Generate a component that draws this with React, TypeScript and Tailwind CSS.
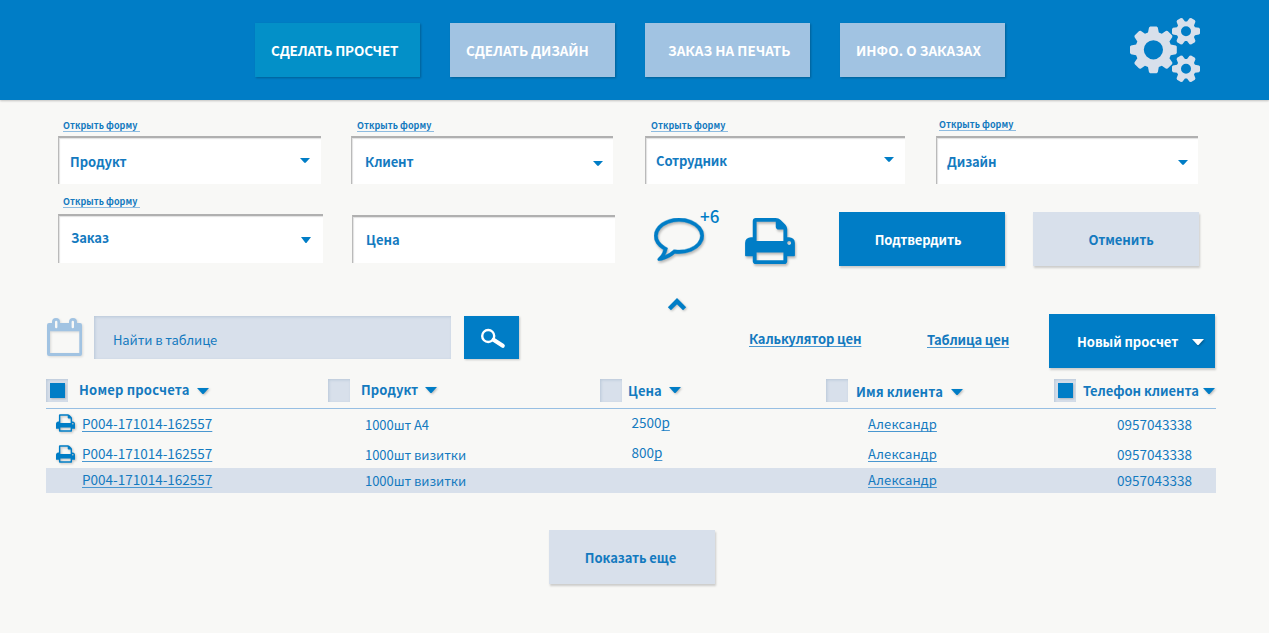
import React from "react";
import type { ReactNode } from "react";
import { clsx } from "clsx";

function Caret({ className }: { className?: string }) {
  return (
    <svg viewBox="0 0 12 6" preserveAspectRatio="none" className={clsx("shrink-0 fill-current", className)}>
      <path d="M0 0H12L7 5.4Q6 6.4 5 5.4Z" />
    </svg>
  );
}

function PrinterIcon({ className }: { className: string }) {
  return (
    <svg viewBox="0 128 1664 1536" className={clsx("shrink-0 fill-current", className)}>
      <path d="M384 1536h896v-256h-896v256zm0-640h896v-384h-160q-40 0-68-28t-28-68v-160h-640v640zm1152 64q0-26-19-45t-45-19-45 19-19 45 19 45 45 19 45-19 19-45zm128 0v416q0 13-9.5 22.5t-22.5 9.5h-224v160q0 40-28 68t-68 28h-960q-40 0-68-28t-28-68v-160h-224q-13 0-22.5-9.5t-9.5-22.5v-416q0-79 56.5-135.5t135.5-56.5h64v-544q0-40 28-68t68-28h672q40 0 88 20t76 48l152 152q28 28 48 76t20 88v256h64q79 0 135.5 56.5t56.5 135.5z" />
    </svg>
  );
}

function CommentIcon() {
  return (
    <svg viewBox="0 256 1792 1544" className="h-[43px] w-[50px] fill-current drop-shadow-[1px_2px_1px_rgba(0,0,0,0.25)]">
      <path d="M896 384q-204 0-381.5 69.5t-282 187.5-104.5 255q0 112 71.500 213.500t201.500 175.500l87 50-27 96q-24 91-70 172 152-63 275-171l43-38 57 6q69 8 130 8 204 0 381.500-69.500t282-187.500 104.500-255-104.500-255-282-187.500-381.500-69.500zm896 512q0 174-120 321.500t-326 233-450 85.500q-70 0-145-8-198 175-460 242-49 14-114 22-17 2-30.500-9t-17.500-29v-1q-3-4-.5-12t2-10 4.500-9.500l6-9 7-8.500 8-9q7-8 31-34.500t34.500-38 31-39.500 32.500-51 27-59 26-76q-157-89-247.500-220t-90.500-281q0-130 71-248.500t191-204.500 286-136.500 348-50.500q244 0 450 85.500t326 233 120 321.500z" stroke="currentColor" strokeWidth="14" />
    </svg>
  );
}

// Outline of a toothed wheel, plus its centre hole (even-odd filled).
function gear(cx: number, cy: number, teeth: number, outer: number, body: number, hole: number, tip: number, base: number) {
  const points: string[] = [];
  for (let i = 0; i < teeth; i++) {
    const a = (i * 2 * Math.PI) / teeth;
    const corners: [number, number][] = [[body, -base], [outer - 1, -tip - 0.4], [outer, -tip + 0.8], [outer, tip - 0.8], [outer - 1, tip + 0.4], [body, base]];
    for (const [r, o] of corners) {
      const x = cx + r * Math.cos(a) - o * Math.sin(a);
      const y = cy + r * Math.sin(a) + o * Math.cos(a);
      points.push(`${x.toFixed(2)} ${y.toFixed(2)}`);
    }
  }
  return `M${points.join("L")}ZM${cx - hole} ${cy}a${hole} ${hole} 0 1 0 ${hole * 2} 0a${hole} ${hole} 0 1 0 ${-hole * 2} 0Z`;
}

function GearsIcon() {
  return (
    <svg viewBox="0 0 70 64" className="h-[64px] w-[70px] fill-[#d8e0eb]" fillRule="evenodd">
      <path d={gear(23.4, 31.8, 8, 23.4, 17.3, 9.6, 4, 5.4)} />
      <path d={gear(56, 13.2, 6, 14, 9, 5, 3, 4)} />
      <path d={gear(56, 50.8, 6, 14, 9, 5, 3, 4)} />
    </svg>
  );
}

function CalendarIcon() {
  return (
    <svg viewBox="0 0 36 39" className="mt-[4px] ml-[47px] h-[39px] w-[36px] shrink-0 drop-shadow-[1px_1px_1px_rgba(0,0,0,0.12)]">
      <path fill="#a1c3e2" fillRule="evenodd" d="M2 5H5V4a4 4 0 0 1 8 0V5h9V4a4 4 0 0 1 8 0V5h3a2 2 0 0 1 2 2V36a2 2 0 0 1-2 2H2a2 2 0 0 1-2-2V7a2 2 0 0 1 2-2ZM3 13.3V35H32.3V13.3Z" />
      <path fill="none" stroke="#f8f8f6" strokeWidth="2.4" strokeLinecap="round" d="M9.2 4V9M25.8 4V9" />
    </svg>
  );
}

const tabs = [
  { text: "СДЕЛАТЬ ПРОСЧЕТ", style: "bg-[#0390c8] pl-[16px] tracking-[-0.15px]" },
  { text: "СДЕЛАТЬ ДИЗАЙН", style: "bg-[#a1c3e2] pl-[16px] tracking-[-0.05px]" },
  { text: "ЗАКАЗ НА ПЕЧАТЬ", style: "bg-[#a1c3e2] pl-[23px] tracking-[0.05px]" },
  { text: "ИНФО. О ЗАКАЗАХ", style: "bg-[#a1c3e2] pl-[16px] tracking-[0.05px]" },
];

function OpenForm({ className }: { className?: string }) {
  return (
    <a className={clsx("block h-[12px] w-[77px] border-b border-[#8dbbe0] text-[9px] leading-[12px] font-bold tracking-[0.05px] whitespace-nowrap", className)}>
      Открыть форму
    </a>
  );
}

function FieldBox({ className, children }: { className: string; children: ReactNode }) {
  return (
    <div className={clsx("flex items-start justify-between border-t-2 border-l border-t-[#b0b0b0] border-l-[#bababa] bg-white text-[13px] leading-5 font-semibold shadow-[inset_1px_1px_1px_rgba(0,0,0,0.12)]", className)}>
      {children}
    </div>
  );
}

function CheckBox({ checked }: { checked?: boolean }) {
  return (
    <span className="flex h-[23px] w-[22px] shrink-0 items-start justify-center bg-[#d8e0eb] pt-[4px] shadow-[inset_1px_1px_3px_rgba(140,165,190,0.4)]">
      {checked && <span className="h-[15px] w-[15px] bg-[#007dc6] shadow-[1px_1px_2px_rgba(0,0,0,0.2)]" />}
    </span>
  );
}

const columns = [
  { text: "Номер просчета", checked: true, label: "ml-[11px] mt-[1px] tracking-[0.2px]", caret: "left-[151px] top-[9px]" },
  { text: "Продукт", checked: false, label: "ml-[11px] mt-[1px] tracking-[0.1px]", caret: "left-[97px] top-[8px]" },
  { text: "Цена", checked: false, label: "ml-[6px] mt-[2px]", caret: "left-[69px] top-[8px]" },
  { text: "Имя клиента", checked: false, label: "ml-[8px] mt-[3px] tracking-[0.12px]", caret: "left-[125px] top-[10px]" },
  { text: "Телефон клиента", checked: true, label: "ml-[7px] mt-[2px] tracking-[-0.05px]", caret: "left-[149px] top-[9px]" },
];

const rows = [
  { product: "1000шт А4", price: "2500", printed: true, style: "h-[29px] pt-[4px]", icon: "pt-[1px]" },
  { product: "1000шт визитки", price: "800", printed: true, style: "h-[30px] pt-[5px]", icon: "pt-[2px]" },
  { product: "1000шт визитки", price: "", printed: false, style: "h-[25px] bg-[#d8e0eb] pt-[1px]", icon: "" },
];

const link = "underline decoration-[#4a97d0] decoration-1 underline-offset-[2px] [text-decoration-skip-ink:none]";
const raised = "shadow-[1px_2px_2px_rgba(0,0,0,0.18)]";

export default function App() {
  return (
    <div className="h-[633px] w-[1269px] overflow-hidden bg-[#f8f8f6] font-['Noto_Sans_CJK_SC','Noto_Sans',sans-serif] whitespace-nowrap text-[#147abf]">
      <header className="flex h-[100px] items-start bg-[#007dc6] pl-[255px] shadow-[0_1px_2px_rgba(0,0,0,0.22)]">
        <nav className="mt-[23px] flex gap-[30px]">
          {tabs.map((tab) => (
            <button key={tab.text} className={clsx("h-[54px] w-[165px] pt-[1px] text-left text-[13.5px] font-bold text-white shadow-[1px_1px_2px_rgba(0,0,0,0.25)]", tab.style)}>
              {tab.text}
            </button>
          ))}
        </nav>
        <div className="mt-[18px] ml-[125px]">
          <GearsIcon />
        </div>
      </header>

      <section className="flex h-[84px] items-start pl-[58px]">
        <div className="mt-[20px] w-[263px]">
          <OpenForm className="ml-[5px]" />
          <FieldBox className="mt-[4px] h-[48px] pl-[11px]">
            <span className="mt-[14px]">Продукт</span>
            <Caret className="mt-[20px] mr-[11px] h-[5px] w-[10px] text-[#007dc6]" />
          </FieldBox>
        </div>
        <div className="mt-[20px] ml-[30px] w-[262px]">
          <OpenForm className="ml-[6px]" />
          <FieldBox className="mt-[4px] h-[48px] pl-[13px]">
            <span className="mt-[14px] tracking-[-0.15px]">Клиент</span>
            <Caret className="mt-[23px] mr-[10px] h-[5px] w-[10px] text-[#007dc6]" />
          </FieldBox>
        </div>
        <div className="mt-[20px] ml-[32px] w-[260px]">
          <OpenForm className="ml-[6px]" />
          <FieldBox className="mt-[4px] h-[48px] pl-[10px]">
            <span className="mt-[13px] tracking-[-0.15px]">Сотрудник</span>
            <Caret className="mt-[19px] mr-[11px] h-[5px] w-[10px] text-[#007dc6]" />
          </FieldBox>
        </div>
        <div className="mt-[19px] ml-[31px] w-[262px]">
          <OpenForm className="ml-[3px]" />
          <FieldBox className="mt-[5px] h-[48px] pl-[10px]">
            <span className="mt-[14px] tracking-[-0.15px]">Дизайн</span>
            <Caret className="mt-[22px] mr-[10px] h-[5px] w-[10px] text-[#007dc6]" />
          </FieldBox>
        </div>
      </section>

      <section className="flex h-[84px] items-start pl-[58px]">
        <div className="mt-[12px] w-[265px]">
          <OpenForm className="ml-[5px]" />
          <FieldBox className="mt-[6px] h-[49px] pl-[12px]">
            <span className="mt-[12px] tracking-[-0.1px]">Заказ</span>
            <Caret className="mt-[21px] mr-[12px] h-[6px] w-[10px] text-[#007dc6]" />
          </FieldBox>
        </div>
        <FieldBox className="mt-[31px] ml-[29px] h-[48px] w-[263px] pl-[13px]">
          <span className="mt-[13px]">Цена</span>
        </FieldBox>
        <div className="relative mt-[34px] ml-[39px] w-[51px] text-[#007dc6]">
          <CommentIcon />
          <span className="absolute -top-[12px] left-[46px] text-[17px] leading-5 font-medium">+6</span>
        </div>
        <PrinterIcon className="mt-[34px] ml-[40px] h-[46px] w-[50px] text-[#007dc6] drop-shadow-[1px_2px_1px_rgba(0,0,0,0.25)]" />
        <button className={clsx("mt-[28px] ml-[44px] h-[54px] w-[166px] bg-[#007dc6] pt-[1px] pr-[8px] text-[13px] font-bold tracking-[-0.15px] text-white", raised)}>
          Подтвердить
        </button>
        <button className={clsx("mt-[28px] ml-[28px] h-[54px] w-[166px] bg-[#d8e0eb] pt-[1px] pl-[10px] text-[13px] font-semibold tracking-[-0.1px]", raised)}>
          Отменить
        </button>
      </section>

      <div className="mt-[29px] h-[17px] pl-[667px]">
        <svg viewBox="0 0 20 14" className="h-[14px] w-[20px] drop-shadow-[1px_1px_1px_rgba(0,0,0,0.25)]">
          <path d="M2.4 11.7L10 4.1L17.6 11.7" fill="none" stroke="#007dc6" strokeWidth="4.4" />
        </svg>
      </div>

      <section className="flex h-[54px] items-start">
        <CalendarIcon />
        <div className="mt-[2px] ml-[11px] h-[43px] w-[357px] bg-[#d8e0eb] pt-[14px] pl-[19px] text-[13px] leading-5 tracking-[-0.1px] shadow-[inset_1px_1px_3px_rgba(140,165,190,0.4)]">
          Найти в таблице
        </div>
        <button className="mt-[2px] ml-[13px] h-[43px] w-[55px] bg-[#007dc6] pl-[15px] shadow-[1px_1px_2px_rgba(0,0,0,0.2)]">
          <svg viewBox="0 0 28 22" className="h-[22px] w-[28px]" fill="none" stroke="#fff">
            <circle cx="9.2" cy="9" r="6" strokeWidth="2.4" />
            <path d="M14.5 12.8L23.8 18.8" strokeWidth="4" strokeLinecap="round" />
          </svg>
        </button>
        <a className={clsx("mt-[15px] ml-[230px] w-[178px] text-[13px] leading-5 font-semibold tracking-[-0.15px]", link)}>Калькулятор цен</a>
        <a className={clsx("mt-[16px] w-[122px] text-[13px] leading-5 font-semibold tracking-[-0.15px]", link)}>Таблица цен</a>
        <button className={clsx("relative h-[54px] w-[166px] bg-[#007dc6] pt-[1px] pl-[28px] text-left text-[13px] font-bold tracking-[-0.05px] text-white", raised)}>
          Новый просчет
          <Caret className="absolute top-[25px] right-[11px] h-[6px] w-[12px] drop-shadow-[1px_1px_1px_rgba(0,0,0,0.3)]" />
        </button>
      </section>

      <section className="mt-[11px] ml-[46px] w-[1170px] text-[13px] leading-5">
        <div className="grid h-[30px] grid-cols-[282px_272px_226px_228px_162px] border-b border-[#97bfe3] font-bold">
          {columns.map((column) => (
            <div key={column.text} className="relative flex items-start">
              <CheckBox checked={column.checked} />
              <span className={column.label}>{column.text}</span>
              <Caret className={clsx("absolute h-[6px] w-[12px] text-[#007dc6] drop-shadow-[1px_1px_1px_rgba(0,0,0,0.25)]", column.caret)} />
            </div>
          ))}
        </div>
        {rows.map((row, index) => (
          <div key={index} className={clsx("grid grid-cols-[282px_272px_226px_228px_162px] items-start", row.style)}>
            <div className="flex items-start pl-[10px]">
              <span className={clsx("h-[20px] w-[26px] text-[#007dc6]", row.icon)}>
                {row.printed && <PrinterIcon className="h-[18px] w-[19px] drop-shadow-[1px_1px_1px_rgba(0,0,0,0.25)]" />}
              </span>
              <a className={clsx("text-[13.5px]", link)}>P004-171014-162557</a>
            </div>
            <span className="mt-[2px] pl-[37px] tracking-[-0.05px]">{row.product}</span>
            <span className="-mt-px pl-[31.5px] text-[13.5px]">
              {row.price}
              {row.price && <a className={link}>р</a>}
            </span>
            <span className="mt-[1px] pl-[42px] tracking-[0.1px]">
              <a className={link}>Александр</a>
            </span>
            <span className="mt-[1px] pl-[63px] text-[13.5px]">0957043338</span>
          </div>
        ))}
      </section>

      <button className={clsx("mt-[37px] ml-[549px] block h-[54px] w-[166px] bg-[#d8e0eb] pt-[1px] pr-[3px] text-[13px] font-semibold tracking-[-0.08px]", raised)}>
        Показать еще
      </button>
    </div>
  );
}
